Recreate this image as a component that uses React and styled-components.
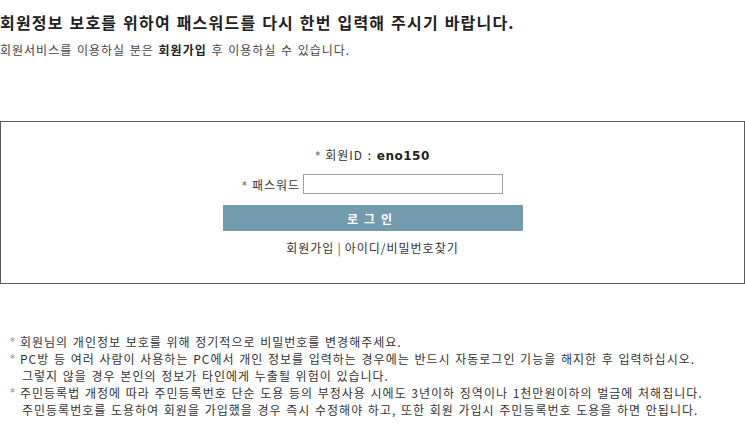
import React from 'react'
import styled, {createGlobalStyle} from 'styled-components'

const Global = createGlobalStyle`
    html, body {
        margin: 0;
        padding: 0;
        background: #fff;
    }
    body {
        font-family: "Noto Sans CJK KR", "Noto Sans", sans-serif;
        color: #333;
        font-size: 12px;
        letter-spacing: 1px;
        word-spacing: 1px;
    }
`

const Page = styled.div`
    width: 745px;
`

const Head = styled.div`
    padding-top: 11px;
    height: 110px;
    box-sizing: border-box;
`

const Title = styled.h1`
    margin: 0;
    font-size: 16px;
    font-weight: bold;
    line-height: 22px;
    letter-spacing: 1.2px;
    color: #222;
`

const Sub = styled.p`
    margin: 9px 0 0;
    font-size: 12px;
    line-height: 16px;
    color: #444;
    b {
        color: #222;
    }
`

const Box = styled.div`
    margin-top: 11px;
    height: 163px;
    box-sizing: border-box;
    border: 1px solid #5a5a5a;
    display: flex;
    flex-direction: column;
    align-items: center;
    padding-top: 24px;
`

const IdRow = styled.div`
    line-height: 18px;
    font-size: 12px;
    color: #333;
    b {
        font-family: "DejaVu Sans", sans-serif;
        font-size: 12px;
        letter-spacing: 0.5px;
        color: #222;
    }
`

const Star = styled.span`
    color: ${props => props.light ? '#888' : '#555'};
    font-family: "DejaVu Sans", sans-serif;
    font-size: 10px;
    margin-right: 4px;
    vertical-align: 1px;
`

const PwRow = styled.label`
    margin-top: 9px;
    display: flex;
    align-items: center;
    gap: 3px;
`

const Input = styled.input`
    width: 200px;
    height: 20px;
    box-sizing: border-box;
    border: 1px solid #a0a0a0;
    padding: 0 3px;
    outline: none;
    margin: 0;
`

const Button = styled.button`
    margin-top: 11px;
    width: 300px;
    height: 26px;
    border: none;
    background: #739aad;
    color: #fff;
    font-family: "Noto Sans CJK KR", sans-serif;
    font-weight: bold;
    font-size: 12px;
    letter-spacing: 6px;
    padding-left: 6px;
    cursor: pointer;
`

const Links = styled.div`
    margin-top: 8px;
    line-height: 18px;
    font-size: 12px;
    color: #333;
    a {
        color: #333;
        text-decoration: none;
    }
`

const Bar = styled.span`
    color: #6a4a60;
    margin: 0 3px;
`

const Notes = styled.ul`
    list-style: none;
    margin: 49px 0 0;
    padding: 0 0 0 10px;
`

const Note = styled.li`
    display: flex;
    line-height: 17px;
    font-size: 12px;
    color: #333;
`

const NoteText = styled.div`
    span {
        display: block;
    }
    span + span {
        padding-left: 2px;
    }
`

const notes = [
    ['회원님의 개인정보 보호를 위해 정기적으로 비밀번호를 변경해주세요.'],
    ['PC방 등 여러 사람이 사용하는 PC에서 개인 정보를 입력하는 경우에는 반드시 자동로그인 기능을 해지한 후 입력하십시오.', '그렇지 않을 경우 본인의 정보가 타인에게 누출될 위험이 있습니다.'],
    ['주민등록법 개정에 따라 주민등록번호 단순 도용 등의 부정사용 시에도 3년이하 징역이나 1천만원이하의 벌금에 처해집니다.', '주민등록번호를 도용하여 회원을 가입했을 경우 즉시 수정해야 하고, 또한 회원 가입시 주민등록번호 도용을 하면 안됩니다.'],
]

export default function App() {
    return (
        <Page>
            <Global />
            <Head>
                <Title>회원정보 보호를 위하여 패스워드를 다시 한번 입력해 주시기 바랍니다.</Title>
                <Sub>회원서비스를 이용하실 분은 <b>회원가입</b> 후 이용하실 수 있습니다.</Sub>
            </Head>
            <Box>
                <IdRow><Star>*</Star>회원ID : <b>eno150</b></IdRow>
                <PwRow><span><Star>*</Star>패스워드</span><Input type="password" /></PwRow>
                <Button>로그인</Button>
                <Links><a href="#">회원가입</a><Bar>|</Bar><a href="#">아이디/비밀번호찾기</a></Links>
            </Box>
            <Notes>
                {notes.map((lines, i) => (
                    <Note key={i}>
                        <Star light>*</Star>
                        <NoteText>
                            {lines.map((l, j) => <span key={j}>{l}</span>)}
                        </NoteText>
                    </Note>
                ))}
            </Notes>
        </Page>
    )
}
